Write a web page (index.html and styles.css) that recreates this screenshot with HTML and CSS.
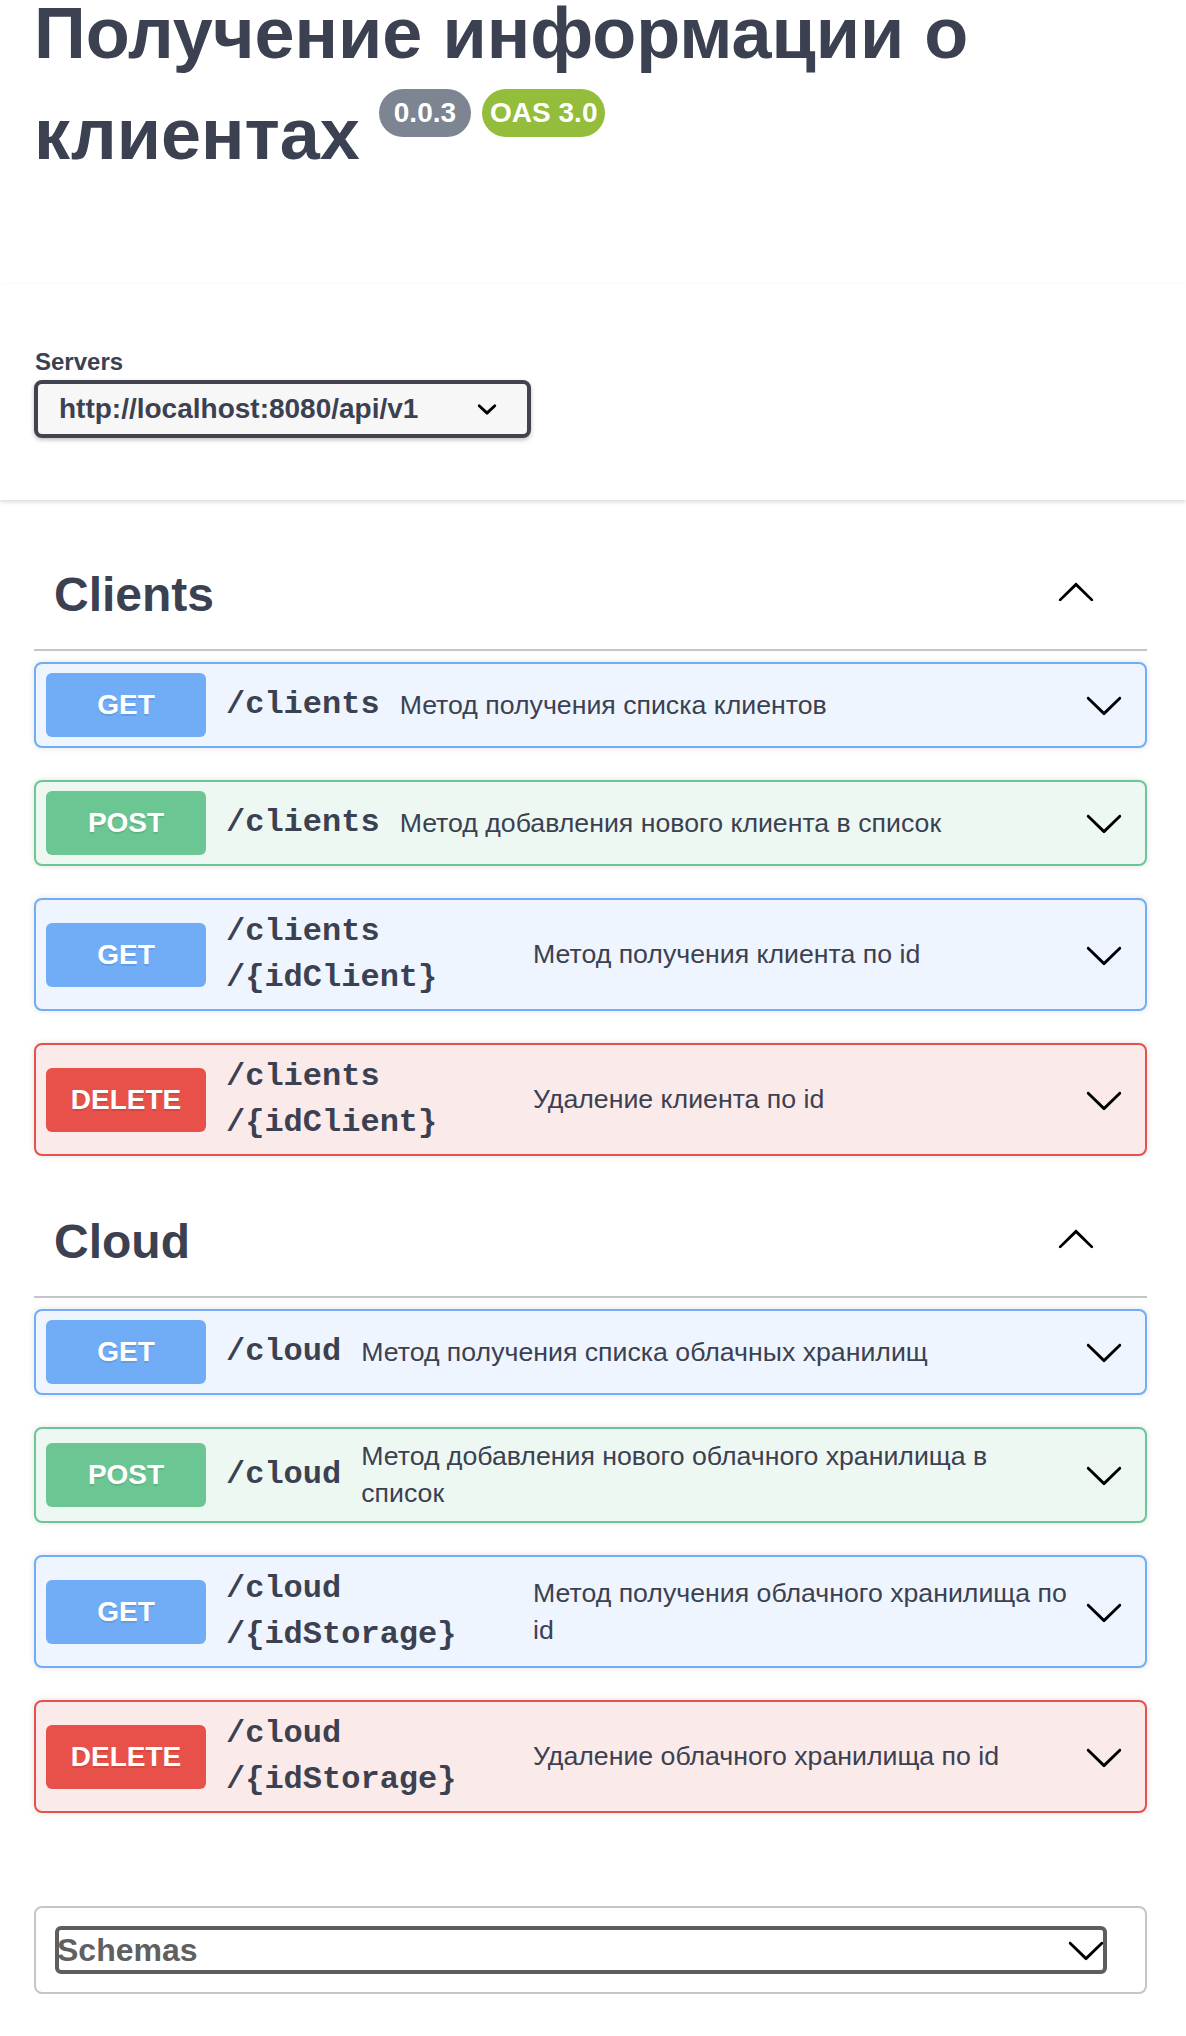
FILE: index.html
```html
<!DOCTYPE html>
<html lang="ru">
<head>
<meta charset="utf-8">
<title>Получение информации о клиентах</title>
<link rel="stylesheet" href="styles.css">
</head>
<body>
<div class="page">
  <header class="info">
    <h2 class="title"><span class="title-text">Получение информации о</span> <span class="title-text">клиентах</span><span class="badge badge-version">0.0.3</span><span class="badge badge-oas">OAS 3.0</span></h2>
  </header>

  <section class="scheme">
    <span class="servers-title">Servers</span>
    <div class="select">
      <span class="select-value">http://localhost:8080/api/v1</span>
      <svg class="select-arrow" width="40" height="40" viewBox="0 0 20 20" aria-hidden="true"><path d="M13.418 7.859a.695.695 0 01.978 0 .68.68 0 010 .969l-3.908 3.83a.697.697 0 01-.979 0l-3.908-3.83a.68.68 0 010-.969.695.695 0 01.978 0L10 11l3.418-3.141z"/></svg>
    </div>
  </section>

  <main class="ops">
    <section class="tag-section">
      <h3 class="tag">
        <span class="tag-name">Clients</span>
        <svg class="arrow tag-arrow" width="40" height="40" viewBox="0 0 20 20" aria-hidden="true"><path d="M17.418 14.908c.272.268.709.268.979 0s.271-.701 0-.969l-7.908-7.83c-.27-.268-.707-.268-.979 0l-7.908 7.83c-.27.268-.27.701 0 .969.271.268.709.268.979 0L10 7.767l7.418 7.141z"/></svg>
      </h3>
      <div class="opblocks">
        <div class="opblock opblock-get">
          <span class="method">GET</span>
          <span class="path">/clients</span>
          <span class="desc">Метод получения списка клиентов</span>
          <svg class="arrow op-arrow" width="40" height="40" viewBox="0 0 20 20" aria-hidden="true"><path d="M17.418 6.109c.272-.268.709-.268.979 0s.271.701 0 .969l-7.908 7.83c-.27.268-.707.268-.979 0l-7.908-7.830c-.27-.268-.27-.701 0-.969.271-.268.709-.268.979 0L10 13.25l7.418-7.141z"/></svg>
        </div>
        <div class="opblock opblock-post">
          <span class="method">POST</span>
          <span class="path">/clients</span>
          <span class="desc">Метод добавления нового клиента в список</span>
          <svg class="arrow op-arrow" width="40" height="40" viewBox="0 0 20 20" aria-hidden="true"><path d="M17.418 6.109c.272-.268.709-.268.979 0s.271.701 0 .969l-7.908 7.83c-.27.268-.707.268-.979 0l-7.908-7.83c-.27-.268-.27-.701 0-.969.271-.268.709-.268.979 0L10 13.25l7.418-7.141z"/></svg>
        </div>
        <div class="opblock opblock-get">
          <span class="method">GET</span>
          <span class="path">/clients<wbr>/{idClient}</span>
          <span class="desc">Метод получения клиента по id</span>
          <svg class="arrow op-arrow" width="40" height="40" viewBox="0 0 20 20" aria-hidden="true"><path d="M17.418 6.109c.272-.268.709-.268.979 0s.271.701 0 .969l-7.908 7.83c-.27.268-.707.268-.979 0l-7.908-7.83c-.27-.268-.27-.701 0-.969.271-.268.709-.268.979 0L10 13.25l7.418-7.141z"/></svg>
        </div>
        <div class="opblock opblock-delete">
          <span class="method">DELETE</span>
          <span class="path">/clients<wbr>/{idClient}</span>
          <span class="desc">Удаление клиента по id</span>
          <svg class="arrow op-arrow" width="40" height="40" viewBox="0 0 20 20" aria-hidden="true"><path d="M17.418 6.109c.272-.268.709-.268.979 0s.271.701 0 .969l-7.908 7.83c-.27.268-.707.268-.979 0l-7.908-7.83c-.27-.268-.27-.701 0-.969.271-.268.709-.268.979 0L10 13.25l7.418-7.141z"/></svg>
        </div>
      </div>
    </section>

    <section class="tag-section">
      <h3 class="tag">
        <span class="tag-name">Cloud</span>
        <svg class="arrow tag-arrow" width="40" height="40" viewBox="0 0 20 20" aria-hidden="true"><path d="M17.418 14.908c.272.268.709.268.979 0s.271-.701 0-.969l-7.908-7.83c-.27-.268-.707-.268-.979 0l-7.908 7.83c-.27.268-.27.701 0 .969.271.268.709.268.979 0L10 7.767l7.418 7.141z"/></svg>
      </h3>
      <div class="opblocks">
        <div class="opblock opblock-get">
          <span class="method">GET</span>
          <span class="path">/cloud</span>
          <span class="desc">Метод получения списка облачных хранилищ</span>
          <svg class="arrow op-arrow" width="40" height="40" viewBox="0 0 20 20" aria-hidden="true"><path d="M17.418 6.109c.272-.268.709-.268.979 0s.271.701 0 .969l-7.908 7.83c-.27.268-.707.268-.979 0l-7.908-7.83c-.27-.268-.27-.701 0-.969.271-.268.709-.268.979 0L10 13.25l7.418-7.141z"/></svg>
        </div>
        <div class="opblock opblock-post">
          <span class="method">POST</span>
          <span class="path">/cloud</span>
          <span class="desc">Метод добавления нового облачного хранилища в список</span>
          <svg class="arrow op-arrow" width="40" height="40" viewBox="0 0 20 20" aria-hidden="true"><path d="M17.418 6.109c.272-.268.709-.268.979 0s.271.701 0 .969l-7.908 7.83c-.27.268-.707.268-.979 0l-7.908-7.83c-.27-.268-.27-.701 0-.969.271-.268.709-.268.979 0L10 13.25l7.418-7.141z"/></svg>
        </div>
        <div class="opblock opblock-get">
          <span class="method">GET</span>
          <span class="path">/cloud<wbr>/{idStorage}</span>
          <span class="desc">Метод получения облачного хранилища по id</span>
          <svg class="arrow op-arrow" width="40" height="40" viewBox="0 0 20 20" aria-hidden="true"><path d="M17.418 6.109c.272-.268.709-.268.979 0s.271.701 0 .969l-7.908 7.83c-.27.268-.707.268-.979 0l-7.908-7.83c-.27-.268-.27-.701 0-.969.271-.268.709-.268.979 0L10 13.25l7.418-7.141z"/></svg>
        </div>
        <div class="opblock opblock-delete">
          <span class="method">DELETE</span>
          <span class="path">/cloud<wbr>/{idStorage}</span>
          <span class="desc">Удаление облачного хранилища по id</span>
          <svg class="arrow op-arrow" width="40" height="40" viewBox="0 0 20 20" aria-hidden="true"><path d="M17.418 6.109c.272-.268.709-.268.979 0s.271.701 0 .969l-7.908 7.83c-.27.268-.707.268-.979 0l-7.908-7.83c-.27-.268-.27-.701 0-.969.271-.268.709-.268.979 0L10 13.25l7.418-7.141z"/></svg>
        </div>
      </div>
    </section>

    <section class="models">
      <h4 class="models-toggle">
        <span class="models-title">Schemas</span>
        <svg class="arrow models-arrow" width="40" height="40" viewBox="0 0 20 20" aria-hidden="true"><path d="M17.418 6.109c.272-.268.709-.268.979 0s.271.701 0 .969l-7.908 7.83c-.27.268-.707.268-.979 0l-7.908-7.83c-.27-.268-.27-.701 0-.969.271-.268.709-.268.979 0L10 13.25l7.418-7.141z"/></svg>
      </h4>
    </section>
  </main>
</div>
</body>
</html>
```

FILE: styles.css
```css
* {
  box-sizing: border-box;
}

html, body {
  margin: 0;
  padding: 0;
  background: #fff;
}

body {
  font-family: "Liberation Sans", Arial, sans-serif;
  color: #3b4151;
}

.page {
  display: flex;
  flex-direction: column;
}

/* ---------- info / title ---------- */
.info {
  margin-top: -17px;
  padding: 0 39px 99px 34px;
}

.title {
  margin: 0;
  font-size: 72px;
  font-weight: 700;
  line-height: 101px;
  color: #3b4151;
}

.badge {
  display: inline-block;
  vertical-align: top;
  margin: 5px 0 0 10px;
  height: 48px;
  line-height: 48px;
  border-radius: 57px;
  font-size: 28px;
  font-weight: 700;
  color: #fff;
  padding: 0 15px;
}

.badge-version {
  background: #7d8492;
  margin-left: 19px;
}

.badge-oas {
  background: #93bd3a;
  padding: 0 8px;
  margin-left: 11px;
}

/* ---------- servers ---------- */
.scheme {
  background: #fff;
  box-shadow: 0 2px 4px 0 rgba(0, 0, 0, .15);
  padding: 64px 39px 62px 34px;
  display: flex;
  flex-direction: column;
  align-items: flex-start;
}

.servers-title {
  display: block;
  font-size: 24px;
  font-weight: 700;
  line-height: 28px;
  padding-left: 1px;
}

.select {
  margin-top: 4px;
  width: 497px;
  height: 58px;
  border: 4px solid #41444e;
  border-radius: 8px;
  background: #f7f7f7;
  box-shadow: 0 2px 4px rgba(0, 0, 0, .25);
  display: flex;
  align-items: center;
  padding: 0 20px 0 21px;
}

.select-value {
  font-size: 28px;
  font-weight: 700;
  color: #3b4151;
}

.select-arrow {
  margin-left: auto;
  fill: #000;
}

/* ---------- operations ---------- */
.ops {
  margin-top: 41px;
  padding: 0 39px 0 34px;
  display: flex;
  flex-direction: column;
  gap: 32px;
}

.tag-section {
  display: flex;
  flex-direction: column;
}

.tag {
  margin: 0 0 11px;
  display: flex;
  align-items: center;
  padding: 20px 51px 20px 20px;
  border-bottom: 2px solid #c4c6cb;
  font-size: 48px;
  font-weight: 700;
  line-height: 68px;
  color: #3b4151;
}

.tag-name {
  flex: 1;
}

.arrow {
  flex: none;
  fill: #000;
}

.tag-arrow {
  margin-top: -8px;
}

.opblocks {
  display: flex;
  flex-direction: column;
  gap: 32px;
}

.opblock {
  display: flex;
  align-items: center;
  border: 2px solid;
  border-radius: 8px;
  padding: 9px 0 9px 10px;
  box-shadow: 0 0 6px rgba(0, 0, 0, .12);
}

.opblock-get {
  border-color: #70adf6;
  background: #eef5fe;
}

.opblock-post {
  border-color: #6cc694;
  background: #eef8f3;
}

.opblock-delete {
  border-color: #e8514a;
  background: #fbeaea;
}

.method {
  flex: none;
  width: 160px;
  height: 64px;
  border-radius: 6px;
  font-size: 28px;
  font-weight: 700;
  line-height: 64px;
  text-align: center;
  color: #fff;
  text-shadow: 0 2px 0 rgba(0, 0, 0, .1);
}

.opblock-get .method { background: #70adf6; }
.opblock-post .method { background: #6cc694; }
.opblock-delete .method { background: #e8514a; }

.path {
  flex: none;
  max-width: 327px;
  padding: 0 20px;
  font-family: "Liberation Mono", "Courier New", monospace;
  font-size: 32px;
  font-weight: 700;
  line-height: 45.5px;
  color: #3b4151;
}

.desc {
  flex: 1;
  font-size: 26.7px;
  line-height: 37px;
  color: #3b4151;
}

.op-arrow {
  margin: 0 21px 0 8px;
}

/* ---------- models ---------- */
.models {
  margin-top: 61px;
  border: 2px solid #c4c6cb;
  border-radius: 8px;
  padding: 18px 38px 18px 19px;
}

.models-toggle {
  margin: 0;
  height: 48px;
  border: 4px solid #5e5e5e;
  border-radius: 6px;
  display: flex;
  align-items: center;
}

.models-title {
  margin-left: -2px;
  font-size: 32px;
  font-weight: 700;
  color: #606060;
}

.models-arrow {
  margin-left: auto;
  margin-right: -3px;
}
```
